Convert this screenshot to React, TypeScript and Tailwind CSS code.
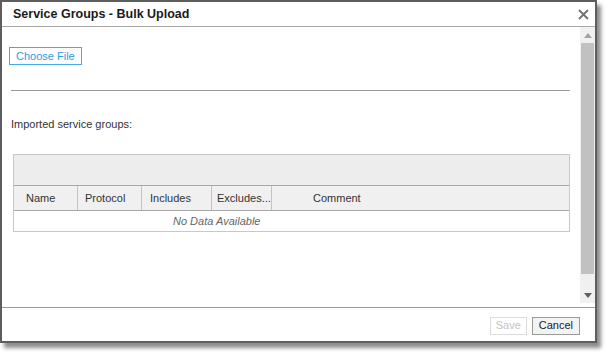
import type { ReactNode } from 'react';

const columns = [
  { label: 'Name', width: 'w-[64px]', pad: 'pl-[12px]' },
  { label: 'Protocol', width: 'w-[64px]', pad: 'pl-[7px]' },
  { label: 'Includes', width: 'w-[70px]', pad: 'pl-[8px]' },
  { label: 'Excludes...', width: 'w-[60px]', pad: 'pl-[5px]' },
] as const;

function HeaderCell({ children, className }: { children: ReactNode; className: string }) {
  return (
    <div className={`flex h-full items-center border-r border-[#c4c4c4] text-[11px] text-[#333] ${className}`}>
      {children}
    </div>
  );
}

function ScrollArrow({ up }: { up?: boolean }) {
  return (
    <div className="flex h-[16px] items-center justify-center">
      <svg width="8" height="5" viewBox="0 0 8 5">
        <path d={up ? 'M0 5 L4 0 L8 5 Z' : 'M0 0 L4 5 L8 0 Z'} fill={up ? '#a3a3a3' : '#606060'} />
      </svg>
    </div>
  );
}

export default function App() {
  return (
    <div className="h-[352px] w-[607px] bg-white font-['Liberation_Sans',Arial,sans-serif]">
      <div className="flex h-[343px] w-[597px] flex-col border-2 border-[#5e5e5e] bg-white shadow-[4px_5px_4px_rgba(0,0,0,0.45)]">
        <div className="flex h-[25px] items-center justify-between border-b border-[#a9a9a9] pl-[11px] pr-[6px]">
          <h1 className="text-[12.5px] font-bold text-[#1a1a1a]">Service Groups - Bulk Upload</h1>
          <svg width="11" height="11" viewBox="0 0 11 11" className="mt-[1px]">
            <path d="M1 1 L10 10 M10 1 L1 10" stroke="#707070" strokeWidth="1.8" />
          </svg>
        </div>

        <div className="flex min-h-0 flex-1">
          <div className="flex-1 pl-[7px] pr-[10px]">
            <button className="mt-[20px] h-[18px] border border-[#45ace3] px-[6px] text-[11px] leading-none text-[#2b9ede]">
              Choose File
            </button>
            <div className="ml-[2px] mt-[23px] h-px bg-[#9a9a9a]" />
            <p className="mt-[25px] pl-[2px] text-[11px] text-[#333]">Imported service groups:</p>

            <div className="ml-[4px] mt-[22px] border border-[#c8c8c8]">
              <div className="h-[30px] bg-[#ededed]" />
              <div className="flex h-[26px] border-t border-b border-[#a9a9a9] bg-[#f0f0f0]">
                {columns.map((c) => (
                  <HeaderCell key={c.label} className={`${c.width} ${c.pad}`}>
                    {c.label}
                  </HeaderCell>
                ))}
                <div className="flex flex-1 items-center pl-[41px] text-[11px] text-[#333]">Comment</div>
              </div>
              <div className="flex h-[20px] items-center pl-[159px] text-[11px] italic text-[#666]">
                No Data Available
              </div>
            </div>
          </div>

          <div className="flex w-[15px] flex-col pb-[4px]">
            <div className="flex flex-1 flex-col bg-[#f0f0f0]">
              <ScrollArrow up />
              <div className="mx-[1px] flex-1 bg-[#c1c1c1]" />
              <div className="h-[13px]" />
              <ScrollArrow />
            </div>
          </div>
        </div>

        <div className="flex h-[34px] items-center justify-end gap-[5px] border-t border-[#9a9a9a] pr-[15px]">
          <button disabled className="mt-[2px] h-[18px] border border-[#dcdcdc] px-[5px] text-[11px] leading-none text-[#c4c4c4]">
            Save
          </button>
          <button className="mt-[2px] h-[18px] border border-[#9a9a9a] bg-[#f3f3f3] px-[6px] text-[11px] leading-none text-[#222]">
            Cancel
          </button>
        </div>
      </div>
    </div>
  );
}
